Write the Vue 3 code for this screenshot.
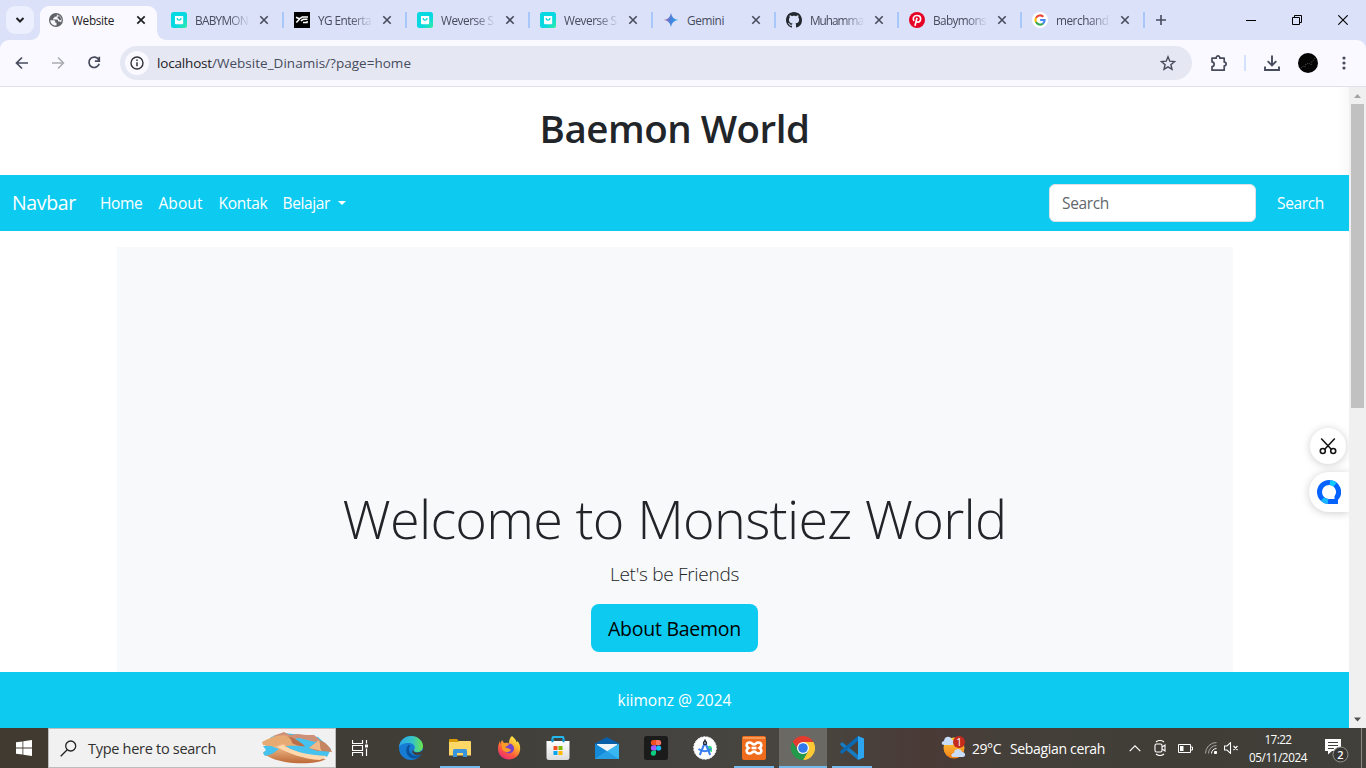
<script setup>
const tabs = [
  { icon: 'weverse', label: 'BABYMON', width: 53 },
  { icon: 'yg', label: 'YG Enterta', width: 53 },
  { icon: 'weverse', label: 'Weverse S', width: 52.5 },
  { icon: 'weverse', label: 'Weverse S', width: 52.5 },
  { icon: 'gemini', label: 'Gemini', width: 37 },
  { icon: 'github', label: 'Muhamma', width: 53 },
  { icon: 'pinterest', label: 'Babymons', width: 53 },
  { icon: 'google', label: 'merchand', width: 52.5 },
]

// Adjusts letter spacing so a label occupies a fixed advance width.
const vFit = {
  mounted(el, { value }) {
    const natural = el.getBoundingClientRect().width
    el.style.letterSpacing = `${(value - natural) / el.textContent.length}px`
  },
}
</script>

<template>
  <div class="screen">
    <div class="tabstrip">
      <button class="tab-search">
        <svg width="10" height="8" viewBox="0 0 10 8"><path d="M1.500 2 5 5.500 8.500 2" fill="none" stroke="#1f2024" stroke-width="2" /></svg>
      </button>
      <div class="tab-active">
        <svg class="favicon" width="16" height="16" viewBox="0 0 16 16"><circle cx="8" cy="8" r="7" fill="#5f6368" /><path d="M2.300 8.200h3.200c1.300 0 1.800.6 1.800 1.700v.8h1.200v2.900c-3.300.2-6-2-6.200-5.400zM8.900 2.400v1.100c0 .8-.5 1.300-1.300 1.300H6.300v1.400H5v1.200h3.600c1 0 1.500.6 1.500 1.300v.8h1.300c.8 0 1.400.5 1.600 1.100 1.900-3.700-.4-7.500-4.100-8.200z" fill="#faf9ff" /><path d="M9.500 3.200c2.200.5 3.700 2.400 3.700 4.600l-1.500.6-1-1.700-1.200-.5V4.700h1.200z" fill="#5f6368" /></svg>
        <span class="tab-label"><span v-fit="42">Website</span></span>
        <svg class="close" width="10" height="10" viewBox="0 0 10 10"><path d="m1.300 1.300 7.400 7.400m0-7.400-7.400 7.400" stroke="#1f2024" stroke-width="1.700" /></svg>
      </div>
      <div v-for="(tab, i) in tabs" :key="i" class="tab">
        <svg v-if="tab.icon === 'weverse'" width="16" height="16" viewBox="0 0 16 16">
          <defs><linearGradient id="wv" x1="0" y1="0" x2="1" y2="1"><stop offset=".6" stop-color="#08d8e0" /><stop offset="1" stop-color="#35efa0" /></linearGradient></defs>
          <rect width="16" height="16" rx="2.500" fill="url(#wv)" /><path d="M4 4h8.200v7.200a1 1 0 0 1-1 1H5a1 1 0 0 1-1-1z" fill="#fff" /><path d="M6.200 6c0 2.700 3.800 2.700 3.800 0" fill="none" stroke="#08d8e0" stroke-width="1.200" />
        </svg>
        <svg v-else-if="tab.icon === 'yg'" width="16" height="16" viewBox="0 0 16 16"><path d="M0 0h16v16H0z" /><path d="m2 5.300 3.200 1.500L8.300 5H14M5.700 7 2.300 10.500M13.500 7.300H9.300L6.800 8.800M9 10.600h4l.3-1.400" fill="none" stroke="#fff" stroke-width="1.500" /></svg>
        <svg v-else-if="tab.icon === 'gemini'" width="16" height="16" viewBox="0 0 16 16">
          <defs><linearGradient id="gm" x1="0" y1=".3" x2="1" y2=".6"><stop offset=".1" stop-color="#b66a9f" /><stop offset=".45" stop-color="#4c7edb" /><stop offset="1" stop-color="#25a6e8" /></linearGradient></defs>
          <path fill="url(#gm)" d="M8 .8c.7 4.300 2.900 6.500 7.200 7.200C10.900 8.700 8.700 10.900 8 15.200 7.300 10.900 5.100 8.700.8 8 5.100 7.300 7.300 5.100 8 .8z" />
        </svg>
        <svg v-else-if="tab.icon === 'github'" width="16" height="16" viewBox="0 0 16 16"><path fill="#24292f" d="M8 0C3.580 0 0 3.580 0 8c0 3.540 2.290 6.530 5.470 7.590.4.070.55-.17.55-.38 0-.19-.01-.82-.01-1.490-2.010.37-2.530-.49-2.690-.94-.09-.23-.48-.94-.82-1.130-.28-.15-.68-.52-.01-.53.63-.01 1.080.58 1.230.82.72 1.210 1.870.87 2.330.66.07-.52.28-.87.51-1.070-1.780-.2-3.640-.89-3.640-3.950 0-.87.31-1.590.82-2.150-.08-.2-.36-1.020.08-2.120 0 0 .67-.21 2.200.82.64-.18 1.320-.27 2-.27s1.360.09 2 .27c1.530-1.040 2.200-.82 2.200-.82.44 1.100.16 1.920.08 2.120.51.56.82 1.270.82 2.150 0 3.070-1.870 3.750-3.650 3.950.29.25.54.73.54 1.480 0 1.070-.01 1.930-.01 2.200 0 .21.15.46.55.38A8.010 8.010 0 0 0 16 8c0-4.420-3.580-8-8-8z" /></svg>
        <svg v-else-if="tab.icon === 'pinterest'" width="16" height="16" viewBox="0 0 16 16"><circle cx="8" cy="8" r="8" fill="#e60023" /><path d="M6 13.800 8 5.800M5 9C3.200 6.700 4.700 3.500 8.100 3.500c4.800 0 4.300 6.700.8 6.700-.9 0-1.500-.5-1.700-1.100" fill="none" stroke="#fff" stroke-width="1.700" /></svg>
        <svg v-else width="16" height="16" viewBox="0 0 16 16"><circle cx="8" cy="8" r="8" fill="#fff" /><g fill="none" stroke-width="2.100"><path d="M11.300 4.700A4.600 4.600 0 0 0 4 5.900" stroke="#ea4335" /><path d="M4 5.800a4.600 4.600 0 0 0 0 4.400" stroke="#fbbc05" /><path d="M4 10.100a4.600 4.600 0 0 0 7.100 1.400" stroke="#34a853" /><path d="M11 11.600A4.500 4.500 0 0 0 12.600 8H8.200" stroke="#4285f4" /></g></svg>
        <span class="tab-label" :class="{ faded: tab.icon !== 'gemini' }"><span v-fit="tab.width">{{ tab.label }}</span></span>
        <svg class="close" width="10" height="10" viewBox="0 0 10 10"><path d="m1.300 1.300 7.400 7.400m0-7.400-7.400 7.400" stroke="#474b5c" stroke-width="1.600" /></svg>
      </div>
      <svg class="new-tab" width="12" height="12" viewBox="0 0 12 12"><path d="M6 1v10M1 6h10" stroke="#474b5c" stroke-width="1.600" /></svg>
      <div class="window-controls">
        <svg width="10" height="10" viewBox="0 0 10 10"><path d="M0 5.500h10" stroke="#000" /></svg>
        <svg width="10" height="10" viewBox="0 0 10 10"><path d="M.5 2.500h7v7h-7zM2.500 2.500v-2h7v7h-2" fill="none" stroke="#000" /></svg>
        <svg width="10" height="10" viewBox="0 0 10 10"><path d="m.3.3 9.400 9.400m0-9.400L.3 9.700" stroke="#000" stroke-width="1.100" /></svg>
      </div>
    </div>

    <div class="toolbar">
      <svg class="nav-icon" width="16" height="16" viewBox="0 0 16 16"><path d="M14 8H3M8 2.500 2.500 8 8 13.500" fill="none" stroke="#474b5c" stroke-width="1.700" /></svg>
      <svg class="nav-icon" width="16" height="16" viewBox="0 0 16 16"><path d="M2 8h11M8 2.500 13.500 8 8 13.500" fill="none" stroke="#aaabb2" stroke-width="1.500" /></svg>
      <svg class="nav-icon" width="16" height="16" viewBox="0 0 16 16"><path d="M12.800 4.800A5.200 5.200 0 1 0 13.200 8.800M13.300 1.800v4.400H8.900" fill="none" stroke="#474b5c" stroke-width="1.700" /></svg>
      <div class="omnibox">
        <span class="site-info"><svg width="14" height="14" viewBox="0 0 14 14"><circle cx="7" cy="7" r="6" fill="none" stroke="#303238" stroke-width="1.400" /><path d="M7 6.200v4M7 3.600V5" stroke="#303238" stroke-width="1.500" /></svg></span>
        <span class="url"><b v-fit="55">localhost</b><span v-fit="199">/Website_Dinamis/?page=home</span></span>
        <svg width="16" height="16" viewBox="0 0 16 16"><path d="m8 1.800 1.800 4.400 4.700.4-3.600 3.100 1.100 4.600L8 11.800l-4 2.500 1.100-4.600-3.600-3.100 4.700-.4z" fill="none" stroke="#474b5c" stroke-width="1.400" /></svg>
      </div>
      <svg class="ext" width="18" height="18" viewBox="0 0 18 18"><path d="M2 4.200h4.200c-.2-3 3.800-3 3.600 0h4.400v4c2.600.1 2.600 3.500 0 3.600v4.400H2v-3.600c2.900-.3 2.900-4.400 0-4.700z" fill="none" stroke="#474b5c" stroke-width="1.700" stroke-linejoin="round" /></svg>
      <i class="tool-sep"></i>
      <svg class="download" width="18" height="18" viewBox="0 0 18 18"><path d="M9 1.500v9.700M4.700 7.200 9 11.500l4.300-4.300M2 12.500V16h14v-3.500" fill="none" stroke="#474b5c" stroke-width="1.900" /></svg>
      <svg class="avatar" width="20" height="20" viewBox="0 0 20 20"><circle cx="10" cy="10" r="10" fill="#050505" /><path d="m3 15 2-2 2 1 1-3 3-1 2 2 1-4 2-1 1-2" fill="none" stroke="#555" stroke-width="1" stroke-dasharray="1 1.400" /></svg>
      <svg class="kebab" width="4" height="16" viewBox="0 0 4 16"><g fill="#474b5c"><circle cx="2" cy="3" r="1.600" /><circle cx="2" cy="8" r="1.600" /><circle cx="2" cy="13" r="1.600" /></g></svg>
    </div>

    <div class="viewport">
      <div class="page">
        <header><h1><span v-fit="270">Baemon World</span></h1></header>
        <nav>
          <a class="brand"><span v-fit="64">Navbar</span></a>
          <a><span v-fit="42.5">Home</span></a>
          <a><span v-fit="44">About</span></a>
          <a><span v-fit="49">Kontak</span></a>
          <a class="dropdown"><span v-fit="47.500">Belajar</span></a>
          <div class="search-box"><span v-fit="47">Search</span></div>
          <a class="search-btn"><span v-fit="47">Search</span></a>
        </nav>
        <main>
          <h2><span v-fit="664">Welcome to Monstiez World</span></h2>
          <p><span v-fit="129">Let's be Friends</span></p>
          <button><span v-fit="133">About Baemon</span></button>
        </main>
        <footer><span v-fit="114">kiimonz @ 2024</span></footer>
        <i class="edge-shadow"></i>
        <div class="float-cut">
          <svg width="18" height="18" viewBox="0 0 18 18"><g fill="none" stroke="#151515" stroke-width="1.600"><path d="m2.200 1.500 10.300 11M15.800 1.500 5.500 12.500" /><circle cx="3.800" cy="14" r="2.500" /><circle cx="14.200" cy="14" r="2.500" /></g></svg>
        </div>
        <div class="float-q">
          <svg width="24" height="24" viewBox="0 0 24 24"><path fill-rule="evenodd" fill="#0663ff" d="M12 0a12 12 0 1 0 0 24h9v-4A12 12 0 0 0 12 0zm0 5a7 7 0 0 1 5.500 11.300V19H12a7 7 0 0 1 0-14z" /><path d="M13 2.550a9.500 9.500 0 0 1 5 2.200" stroke="#13c8ff" stroke-width="5" fill="none" /><path d="M5.500 19A9.500 9.500 0 0 0 11 21.500" stroke="#16b9ff" stroke-width="4.800" fill="none" /></svg>
        </div>
      </div>
      <div class="scrollbar">
        <svg width="17" height="17" viewBox="0 0 17 17"><path d="m5 11 3.500-4 3.500 4z" fill="#a3a3a3" /></svg>
        <i class="thumb"></i>
        <svg width="17" height="17" viewBox="0 0 17 17"><path d="m5 6.500 3.500 4 3.500-4z" fill="#505050" /></svg>
      </div>
    </div>

    <div class="taskbar">
      <div class="start"><svg width="16" height="16" viewBox="0 0 16 16"><path fill="#fff" d="m0 2.300 6.500-.9v6.100H0zM7.300 1.200 16 0v7.500H7.300zM0 8.400h6.500v6.200L0 13.700zM7.300 8.400H16V16l-8.700-1.200z" /></svg></div>
      <div class="tb-search">
        <svg width="17" height="17" viewBox="0 0 17 17"><g fill="none" stroke="#222" stroke-width="1.300"><circle cx="10.700" cy="6" r="5" /><path d="M7.200 9.700.7 16.200" /></g></svg>
        <span class="tb-placeholder"><span v-fit="128">Type here to search</span></span>
        <svg class="dunes" width="72" height="34" viewBox="0 0 72 34">
          <defs><linearGradient id="dn" x1="0" y1="0" x2="0" y2="1"><stop offset="0" stop-color="#f6c694" /><stop offset="1" stop-color="#bd6836" /></linearGradient></defs>
          <path d="M10 6 23 2l34 4 13 12-4 8-40-2L4 16z" fill="#45c2ed" />
          <path d="M12 5 23 1l6 3 8-1 8 1 8 0 6 5-5 2-16-4-14 3z" fill="#cf9078" />
          <path d="M1 11c9-5 18-8 27-6 9 5 10 8 15 10-10 0-18-1-26 2L2 14z" fill="#e6aa72" />
          <path d="M26 5c8 2 13 6 18 10-5 1-9-1-13-3 0-3-2-5-5-7z" fill="#b97048" />
          <path d="M2 22c4-4 11-7 21-9 4 6 23 12 42 15-12 7-50 6-63-6z" fill="url(#dn)" />
          <path d="M22 14c8 6 24 10 44 11l-7 4C42 28 27 22 16 16z" fill="#ffd9ad" />
          <path d="M2 22 5 19 2 15h8l8 3-7 5-7 2z" fill="#45c2ed" />
          <path d="M48 17 58 9c6 2 10 5 13 12-6-1-11-1-15-1z" fill="#c68561" /><path d="M48 17 58 9c2 5 0 8 3 11z" fill="#efb98a" />
        </svg>
      </div>
      <div class="apps">
        <div class="app"><svg width="16" height="16" viewBox="0 0 16 16"><path d="M.5 0v3.500h10V0M.5 5.500h10v5H.5zM.5 16v-3.500h10V16M14.500 0v3.500M14.500 8.500V16" fill="none" stroke="#fff" stroke-width="1.200" /><path d="M13 4.500h3v3h-3z" fill="#fff" /></svg></div>
        <div class="app">
          <svg width="24" height="24" viewBox="0 0 24 24"><defs><linearGradient id="e1"><stop offset="0" stop-color="#2aa7e8" /><stop offset=".55" stop-color="#35c3c7" /><stop offset="1" stop-color="#6ce64a" /></linearGradient></defs><circle cx="12" cy="12" r="12" fill="#167bd3" /><path d="M0 11C1 4 6 0 12 0c7 0 12 5 12 10 0 4-3 6-6 6s-4-1-3-2c2-3 0-7-5-7C5 7 1 9 0 11z" fill="url(#e1)" /><path d="M9.500 9C6 12 7 18 10 20.500c4 3.500 9 2 12-1.500-6 2-11 0-12-5-.2-2 .3-3.500 1.500-4.800z" fill="#0b529c" /><path d="M14.500 13.500c-.5 2 1 3 3.500 3 2.300 0 4.500-.8 6-2.500v2.500L22.300 18.500c-4 1.500-8.500.5-9.300-3z" fill="#433f3a" /></svg>
        </div>
        <div class="app open">
          <svg width="22" height="18" viewBox="0 0 22 18"><path d="M0 1a1 1 0 0 1 1-1h7l1.500 2H21v6H0z" fill="#d99b05" /><path d="M0 3h9l1-1h11a1 1 0 0 1 1 1v13.500H0z" fill="#ffd766" /><path d="M4 18v-6.500a1.500 1.500 0 0 1 1.500-1.500h11a1.500 1.500 0 0 1 1.500 1.500V18h-4v-4H8v4z" fill="#3895dc" /></svg>
        </div>
        <div class="app">
          <svg width="24" height="24" viewBox="0 0 24 24"><defs><linearGradient id="ff" x1=".8" y1="0" x2=".2" y2="1"><stop offset="0" stop-color="#fff44f" /><stop offset=".35" stop-color="#ffb22e" /><stop offset=".65" stop-color="#ff5f3a" /><stop offset="1" stop-color="#e72280" /></linearGradient></defs><path d="M15 0c2 2 4 3.500 4.500 6 1-.2 1-1 1-1C23 8 23.500 11 23 14.500 22 20 17.500 23.500 12 23.500 6 23.500 1 19 1 13c0-4 1-6 2-8v3l2-4 2 3c2-.5 4-.5 5 0C12 4 13 1.500 15 0z" fill="url(#ff)" /><circle cx="12" cy="12.500" r="5" fill="#7542cc" /><path d="M4.500 8c3-2 6-1 8 1-2 0-2.500 1.500-4.500 2 2 2 5 1 6 3-3 4-8 2-9-2z" fill="#ff9b27" /></svg>
        </div>
        <div class="app">
          <svg width="24" height="24" viewBox="0 0 24 24"><defs><linearGradient id="st" x1="0" y1="0" x2="0" y2="1"><stop offset="0" stop-color="#fff" /><stop offset="1" stop-color="#dcdcdc" /></linearGradient></defs><path d="M6.500 6V2a1 1 0 0 1 1-1h9a1 1 0 0 1 1 1v4" fill="none" stroke="#21b9f0" stroke-width="2" /><path d="M.5 5h23v16.500a2.500 2.500 0 0 1-2.500 2.500H3a2.500 2.500 0 0 1-2.500-2.500z" fill="url(#st)" /><path d="M6.500 3v3.200M17.500 3v3.200" stroke="#1493cd" stroke-width="2" /><path d="M7.500 10h4v4h-4z" fill="#f25022" /><path d="M12.500 10h4v4h-4z" fill="#7fba00" /><path d="M7.500 15h4v4h-4z" fill="#00a4ef" /><path d="M12.500 15h4v4h-4z" fill="#ffb900" /></svg>
        </div>
        <div class="app"><svg width="24" height="24" viewBox="0 0 24 24"><path d="M0 7.500 12 1l12 6.500V13H0z" fill="#0a5fa9" /><path d="M2 8h20v8H2z" fill="#f1f5f8" /><path d="m0 7.500 14 9L0 23z" fill="#1389d8" /><path d="M24 7.500V23H0z" fill="#38b6f1" /><path d="m12 15.300 12 7.700H0z" fill="#279ee3" /></svg></div>
        <div class="app"><svg width="24" height="24" viewBox="0 0 24 24"><rect width="24" height="24" rx="2.500" fill="#1b1b1b" /><path d="M12 4H9.500a2.600 2.600 0 0 0 0 5.300H12z" fill="#f24e1e" /><path d="M12 4h2.500a2.600 2.600 0 0 1 0 5.300H12z" fill="#ff7262" /><path d="M12 9.300H9.500a2.600 2.600 0 0 0 0 5.300H12z" fill="#a259ff" /><circle cx="14.600" cy="12" r="2.600" fill="#1abcfe" /><path d="M12 14.600H9.500a2.600 2.600 0 1 0 2.500 2.700z" fill="#0acf83" /></svg></div>
        <div class="app"><svg width="24" height="24" viewBox="0 0 24 24"><circle cx="12" cy="12" r="11.300" fill="#fff" stroke="#f5f5f5" stroke-dasharray="2 1.200" /><path d="M14 10.500c3-1.500 5-.5 5 2.500v3l-4-1z" fill="#3ddc84" /><path d="m11.300 8-4.500 11M12.700 8l4.500 11" fill="none" stroke="#3b7ff0" stroke-width="2" /><path d="M5.500 13c3.500 3 9 3 12.500 0" fill="none" stroke="#3b7ff0" stroke-width="1.800" /><circle cx="12" cy="7" r="2.200" fill="#202a38" /><path d="M11.200 3.500h1.600v3h-1.600z" fill="#202a38" /><circle cx="12" cy="7" r=".8" fill="#fff" /></svg></div>
        <div class="app open"><svg width="24" height="24" viewBox="0 0 24 24"><rect width="24" height="24" rx="2" fill="#ee6c1b" /><path d="M1 1h22v2H1z" fill="#f69a58" /><path d="M7.500 6.500C4.500 6.500 3.500 10 6.500 12c-3 2-2 5.500 1 5.500 2.500 0 2.500-2 4.500-2s2 2 4.500 2c3 0 4-3.500 1-5.500 3-2 2-5.500-1-5.500-2.500 0-2.500 2-4.500 2s-2-2-4.500-2z" fill="none" stroke="#fff" stroke-width="2.600" /><path d="M9.500 12h5" stroke="#fff" stroke-width="2.600" /></svg></div>
        <div class="app current"><svg width="24" height="24" viewBox="0 0 24 24"><path d="M1.600 6A12 12 0 0 1 22.400 6H12v12z" fill="#e33b2e" /><path d="M22.400 6A12 12 0 0 1 12 24l5.200-9L12 6z" fill="#fcc934" /><path d="M1.600 6A12 12 0 0 0 12 24l5.200-9H6.800z" fill="#23994b" /><circle cx="12" cy="12" r="6" fill="#fff" /><circle cx="12" cy="12" r="4.800" fill="#3179ed" /></svg></div>
        <div class="app open"><svg width="24" height="24" viewBox="0 0 24 24"><path d="m0 8 2-2 16 13v5L1 9.500z" fill="#177bc1" /><path d="m0 16 2 2L18 5V0L1 14.500z" fill="#0a69b3" /><path d="m18 0 6 2.500v19L18 24z" fill="#2da6f2" /></svg></div>
      </div>
      <div class="weather">
        <svg width="26" height="24" viewBox="0 0 26 24"><defs><linearGradient id="sun" x1="0" y1="0" x2="0" y2="1"><stop offset="0" stop-color="#ffd042" /><stop offset="1" stop-color="#f27c16" /></linearGradient></defs><circle cx="13" cy="12" r="10.500" fill="url(#sun)" /><path d="M3 9C0 9 0 5 3 5c0-5 7-6 8-1 4 0 3 5 0 5zM13 21c-4 0-3-4 0-4 0-5 7-5 8-1 4 0 4 5 1 5z" fill="#c8ddf8" /><circle cx="18" cy="6" r="6" fill="#c42b1c" /><text x="18" y="9.500" text-anchor="middle" fill="#fff" font-size="10" font-family="Open Sans, sans-serif">1</text></svg>
        <span v-fit="29">29°C</span><span class="condition"><span v-fit="95">Sebagian cerah</span></span>
      </div>
      <div class="tray">
        <svg width="12" height="7" viewBox="0 0 12 7"><path d="M.7 6.200 6 .9l5.300 5.300" fill="none" stroke="#fff" stroke-width="1.200" /></svg>
        <svg width="12" height="16" viewBox="0 0 12 16"><g fill="none" stroke="#fff" stroke-width="1.100"><rect x="1" y="4" width="7" height="8" rx="1.500" /><path d="m8 7 3-2v6L8 9M2 2c2-2 6-2 8 0M2 14c2 2 6 2 8 0" /></g></svg>
        <svg width="15" height="9" viewBox="0 0 15 9"><path d="M.5.5h12v8H.5zM13 3h1.500v3H13" fill="none" stroke="#fff" /><path d="M2 2h3.500v5H2z" fill="#fff" /></svg>
        <svg width="12" height="12" viewBox="0 0 12 12"><g fill="none" stroke="#aaa8a5"><path d="M.5 11.500a11 11 0 0 1 11-11M3.500 11.500a8 8 0 0 1 8-8" /><path d="M6.500 11.500a5 5 0 0 1 5-5" stroke="#fff" /></g><path d="M9.500 11.500v-2h2v2z" fill="#fff" stroke="#fff" /></svg>
        <svg width="15" height="12" viewBox="0 0 15 12"><path d="M.5 4H3l3.500-3.300v10.600L3 8H.5zM9.500 4l4 4M13.500 4l-4 4" fill="none" stroke="#fff" stroke-width="1.100" /></svg>
      </div>
      <div class="clock"><span v-fit="27">17:22</span><span v-fit="58">05/11/2024</span></div>
      <div class="notify">
        <svg width="24" height="24" viewBox="0 0 24 24"><path d="M0 0h16v12H7l-4 3.500V12H0z" fill="#fff" /><path d="M3 3.500h10M3 6.500h10M3 9.500h6" stroke="#433f3a" /><circle cx="15.500" cy="15.500" r="7.500" fill="#393735" stroke="#96938f" /><text x="15.500" y="19.500" text-anchor="middle" fill="#fff" font-size="11" font-weight="600" font-family="Open Sans, sans-serif">2</text></svg>
      </div>
      <i class="show-desktop"></i>
    </div>
  </div>
</template>

<style>
body { margin: 0; overflow: hidden; }
</style>
<style scoped>
* { box-sizing: border-box; }
.screen { width: 1366px; height: 768px; display: flex; flex-direction: column; overflow: hidden; font-family: "Open Sans", "Noto Sans", sans-serif; white-space: nowrap; background: #dae1f9; }
svg { display: block; flex: none; }
button { border: 0; padding: 0; font: inherit; }

.tabstrip { position: relative; z-index: 1; height: 40px; background: #dae1f9; display: flex; align-items: center; font-size: 11.800px; color: #474b5c; }
.tab-search { width: 28px; height: 28px; margin-left: 6px; border-radius: 9px; background: #ecf0fe; display: flex; align-items: center; justify-content: center; }
.tab-active { position: relative; width: 117px; height: 34px; margin: 6px 3px 0 6px; padding-left: 8px; padding-bottom: 6px; border-radius: 9px 9px 0 0; background: #faf9ff; color: #1f2024; display: flex; align-items: center; }
.tab-active::before, .tab-active::after { content: ""; position: absolute; bottom: 0; width: 9px; height: 9px; }
.tab-active::before { left: -9px; background: radial-gradient(circle at 0 0, transparent 8.500px, #faf9ff 9px); }
.tab-active::after { right: -9px; background: radial-gradient(circle at 100% 0, transparent 8.500px, #faf9ff 9px); }
.tab-label { margin-left: 8px; width: 53px; flex: none; }
.tab-label > span { display: inline-block; }
.tab-active .tab-label { width: 55px; }
.faded { -webkit-mask-image: linear-gradient(90deg, #000 62%, transparent 104%); mask-image: linear-gradient(90deg, #000 62%, transparent 104%); }
.close { margin-left: 11px; }
.tab-active .close { margin-left: 9px; }
.tab { width: 123px; height: 16px; padding-left: 11px; display: flex; align-items: center; }
.tab::after { content: ""; width: 2px; height: 16px; margin-left: 13px; margin-right: -1px; background: #a8c7fa; }
.new-tab { margin-left: 11px; }
.window-controls { display: flex; gap: 36px; margin-left: auto; margin-right: 18px; }

.toolbar { height: 47px; border-bottom: 1px solid #dfe1ee; background: #faf9ff; border-radius: 9px 9px 0 0; display: flex; align-items: center; padding-left: 14px; }
.nav-icon { margin-right: 20px; }
.omnibox { width: 1072px; height: 34px; margin-left: -2px; border-radius: 17px; background: #e5e8f3; display: flex; align-items: center; padding: 0 16px 0 5px; }
.site-info { width: 24px; height: 24px; border-radius: 50%; background: #faf9ff; display: grid; place-items: center; }
.url { flex: 1; margin-left: 8px; font-size: 13.500px; color: #474b5c; }
.url b { font-weight: 400; color: #1f2024; }
.url > * { display: inline-block; }
.ext { margin-left: 18px; }
.tool-sep { width: 2px; height: 16px; margin: 0 17px 0 16px; background: #d3e3fd; }
.avatar { margin-left: 17px; }
.kebab { margin-left: 24px; }

.viewport { height: 641px; display: flex; background: #fff; }
.page { position: relative; width: 1349px; height: 641px; overflow: hidden; color: #212529; font-size: 15.500px; }
.page span { display: inline-block; }
header { height: 88px; padding-top: 15px; text-align: center; }
h1 { margin: 0; font-size: 38.500px; line-height: 52px; font-weight: 600; }
nav { height: 56px; background: #0dcaf0; color: #fff; display: flex; align-items: center; padding-left: 12px; gap: 16px; }
nav a { line-height: 24px; }
.brand { font-size: 19.500px; margin-right: 8px; line-height: 30px; }
.dropdown { display: flex; align-items: center; gap: 8px; margin-left: -1px; }
.dropdown::after { content: ""; border: 4.500px solid transparent; border-top-color: #fff; border-bottom: 0; }
.search-box { width: 207px; height: 38px; margin-left: auto; border: 1px solid #dee2e6; border-radius: 6px; background: #fff; color: #62676c; line-height: 36px; padding-left: 12px; }
.search-btn { width: 72px; margin-left: 5px; }
main { width: 1116px; height: 600px; margin: 16px auto 0; padding-top: 238px; background: #f8f9fa; text-align: center; }
h2 { margin: 0; font-size: 54px; line-height: 67px; font-weight: 300; }
p { margin: 7px 0 15px; font-size: 19px; line-height: 30px; font-weight: 300; }
main button { width: 167px; height: 48px; border-radius: 8px; background: #0dcaf0; color: #000; font-size: 19.500px; line-height: 49px; vertical-align: top; }
footer { position: absolute; left: 0; right: 0; bottom: 0; height: 56px; background: #0dcaf0; color: #fff; line-height: 56px; text-align: center; }
.edge-shadow { position: absolute; right: 0; top: 0; width: 12px; height: 88px; background: linear-gradient(90deg, #fff0, #f9f9f9); }
.float-cut { position: absolute; right: 3px; top: 341px; width: 36px; height: 36px; border-radius: 50%; background: #fff; box-shadow: 0 1px 9px #0003; display: grid; place-items: center; }
.float-q { position: absolute; right: 0; top: 385px; width: 40px; height: 40px; border-radius: 20px 0 0 20px; background: #fff; box-shadow: 0 1px 9px #0003; display: grid; place-items: center; }
.scrollbar { width: 17px; background: #f0f0f0; display: flex; flex-direction: column; }
.thumb { width: 13px; height: 304px; margin: 0 2px auto; background: #c1c1c1; }

.taskbar { height: 40px; display: flex; align-items: center; color: #fff; background: linear-gradient(90deg, #403a30 0, #403d37 28%, #454440 50%, #48453e 60%, #4a3a36 68%, #453f3a 73%, #3f3d36 88%, #42403b); }
.start { width: 48px; display: grid; place-items: center; }
.tb-search { width: 288px; height: 40px; border: 1px solid #bdbdbd; background: #f1f1f1; display: flex; align-items: center; padding-left: 11px; }
.tb-placeholder { margin-left: 11px; width: 173px; color: #303030; font-size: 14.500px; }
.tb-placeholder span { display: inline-block; }
.apps { display: flex; gap: 1px; }
.app { width: 48px; height: 40px; display: grid; place-items: center; position: relative; }
.app:first-child { margin-right: 2px; }
.app.open::after, .app.current::after { content: ""; position: absolute; bottom: 0; left: 4px; right: 4px; height: 2px; background: #76b9ed; }
.app.current { background: #6b6964; }
.app.current::after { left: 0; right: 0; }
.weather { display: flex; align-items: center; margin-left: 65px; font-size: 14px; }
.weather span { display: inline-block; }
.weather > svg { margin-right: 5px; }
.condition { margin-left: 9px; }
.tray { display: flex; align-items: center; margin-left: 24px; gap: 12px; }
.tray svg:nth-child(2) { margin-left: 1px; }
.tray svg:nth-child(5) { margin-left: -5px; }
.clock { width: 70px; margin-left: 4px; margin-top: -1px; display: flex; flex-direction: column; align-items: center; font-size: 11.700px; line-height: 18px; }
.clock span { display: inline-block; }
.notify { margin-left: 12px; padding-top: 6px; }
.show-desktop { width: 1px; height: 40px; background: #8a8783; margin: 0 4px 0 auto; }
</style>
